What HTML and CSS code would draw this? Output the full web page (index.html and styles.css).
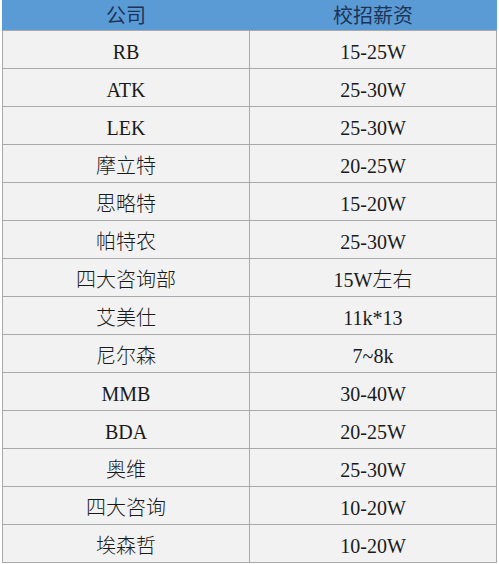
FILE: index.html
```html
<!DOCTYPE html>
<html lang="zh">
<head>
<meta charset="utf-8">
<link rel="stylesheet" href="styles.css">
</head>
<body>
<table class="salary">
  <thead>
    <tr><th>公司</th><th>校招薪资</th></tr>
  </thead>
  <tbody>
    <tr><td>RB</td><td>15-25W</td></tr>
    <tr><td>ATK</td><td>25-30W</td></tr>
    <tr><td>LEK</td><td>25-30W</td></tr>
    <tr><td>摩立特</td><td>20-25W</td></tr>
    <tr><td>思略特</td><td>15-20W</td></tr>
    <tr><td>帕特农</td><td>25-30W</td></tr>
    <tr><td>四大咨询部</td><td>15W左右</td></tr>
    <tr><td>艾美仕</td><td>11k*13</td></tr>
    <tr><td>尼尔森</td><td>7~8k</td></tr>
    <tr><td>MMB</td><td>30-40W</td></tr>
    <tr><td>BDA</td><td>20-25W</td></tr>
    <tr><td>奥维</td><td>25-30W</td></tr>
    <tr><td>四大咨询</td><td>10-20W</td></tr>
    <tr><td>埃森哲</td><td>10-20W</td></tr>
  </tbody>
</table>
</body>
</html>
```
FILE: styles.css
```css
html, body {
  margin: 0;
  padding: 0;
  background: #ffffff;
}
body {
  padding-left: 2px;
}
.salary {
  border-collapse: collapse;
  width: 495px;
  table-layout: fixed;
  font-family: "Liberation Serif", "Noto Sans CJK SC", serif;
  font-size: 20px;
  color: #1a1a1a;
}
.salary th {
  background: #5b9bd5;
  color: #1c3457;
  font-family: "Noto Sans CJK SC", sans-serif;
  font-weight: 400;
  font-size: 20px;
  height: 30px;
  box-sizing: border-box;
  padding: 0;
  line-height: 28px;
  border-left: 1px solid #5b9bd5;
  border-right: 1px solid #5b9bd5;
  border-bottom: 1px solid #a9a9a9;
}
.salary th + th {
  border-left: 1px solid #8fb4d8;
}
.salary td {
  background: #f2f2f2;
  text-align: center;
  height: 38px;
  padding: 6px 0 0 0;
  line-height: 28px;
  box-sizing: border-box;
  border: 1px solid #a9a9a9;
  border-top: 0;
  font-weight: 300;
}
```
